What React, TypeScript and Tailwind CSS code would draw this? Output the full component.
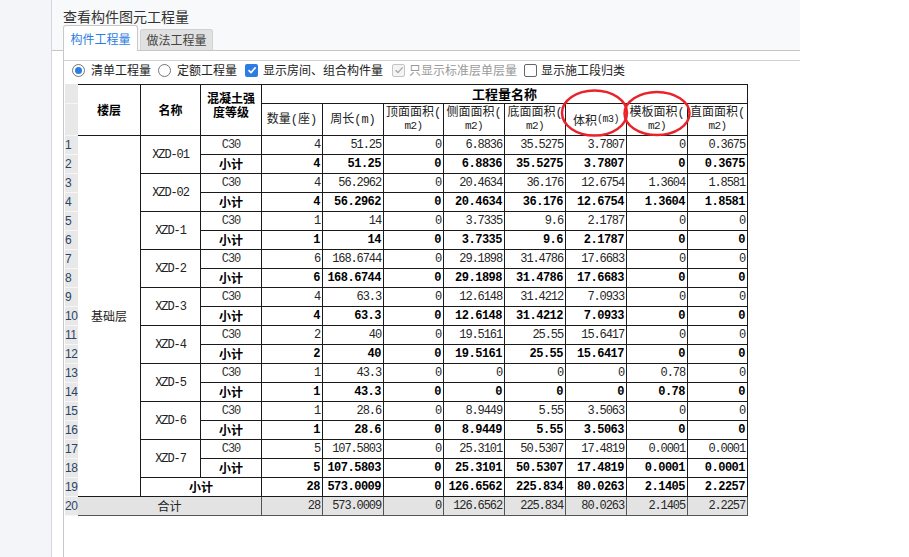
import clsx from "clsx";

const groups: { name: string; values: string[] }[] = [
  { name: "XZD-01", values: ["4", "51.25", "0", "6.8836", "35.5275", "3.7807", "0", "0.3675"] },
  { name: "XZD-02", values: ["4", "56.2962", "0", "20.4634", "36.176", "12.6754", "1.3604", "1.8581"] },
  { name: "XZD-1", values: ["1", "14", "0", "3.7335", "9.6", "2.1787", "0", "0"] },
  { name: "XZD-2", values: ["6", "168.6744", "0", "29.1898", "31.4786", "17.6683", "0", "0"] },
  { name: "XZD-3", values: ["4", "63.3", "0", "12.6148", "31.4212", "7.0933", "0", "0"] },
  { name: "XZD-4", values: ["2", "40", "0", "19.5161", "25.55", "15.6417", "0", "0"] },
  { name: "XZD-5", values: ["1", "43.3", "0", "0", "0", "0", "0.78", "0"] },
  { name: "XZD-6", values: ["1", "28.6", "0", "8.9449", "5.55", "3.5063", "0", "0"] },
  { name: "XZD-7", values: ["5", "107.5803", "0", "25.3101", "50.5307", "17.4819", "0.0001", "0.0001"] },
];

const total = ["28", "573.0009", "0", "126.6562", "225.834", "80.0263", "2.1405", "2.2257"];

const cell = "border-r border-b border-[#1a1a1a] flex items-center";
const cjk = "font-['Noto_Sans_CJK_SC',sans-serif]";
const mono = "font-['Liberation_Mono',monospace]";

function Num({ v, bold, gray }: { v: string; bold?: boolean; gray?: boolean }) {
  return (
    <div
      className={clsx(
        cell,
        mono,
        "justify-end pr-[2px] text-[12px] leading-none",
        bold ? "font-bold tracking-[-0.5px] text-black" : "tracking-[-1.1px] text-[#262626]",
        gray && "bg-[#e3e3e3] border-[#555]"
      )}
    >
      {v}
    </div>
  );
}

function Head({ top, bottom }: { top: string; bottom?: string }) {
  return (
    <div className={clsx(cell, "flex-col justify-center text-[#222]")}>
      <span className="whitespace-nowrap text-[12px] leading-[14px] font-['Liberation_Mono','Noto_Sans_CJK_SC',monospace]">{top}</span>
      {bottom && <span className={clsx(mono, "text-[11px] leading-[13px] tracking-[-0.6px]")}>{bottom}</span>}
    </div>
  );
}

function Radio({ on }: { on?: boolean }) {
  return (
    <span className="w-[13px] h-[13px] rounded-full border border-[#777] bg-white flex items-center justify-center">
      {on && <span className="w-[7px] h-[7px] rounded-full bg-[#2a7de1]" />}
    </span>
  );
}

function Check({ state }: { state: "on" | "off" | "disabled" }) {
  if (state === "on")
    return (
      <span className="w-[13px] h-[13px] rounded-[2px] bg-[#2d7be5] flex items-center justify-center">
        <svg width="10" height="10" viewBox="0 0 10 10">
          <path d="M1.5 5.2 L4 7.6 L8.6 2.4" fill="none" stroke="white" strokeWidth="1.6" />
        </svg>
      </span>
    );
  if (state === "disabled")
    return (
      <span className="w-[13px] h-[13px] rounded-[2px] border border-[#c4c4c4] bg-[#f4f4f4] flex items-center justify-center">
        <svg width="10" height="10" viewBox="0 0 10 10">
          <path d="M1.5 5.2 L4 7.6 L8.6 2.4" fill="none" stroke="#a8a8a8" strokeWidth="1.4" />
        </svg>
      </span>
    );
  return <span className="block w-[13px] h-[13px] rounded-[2px] border border-[#666] bg-white" />;
}

export default function App() {
  const rowNums = Array.from({ length: 20 }, (_, i) => i + 1);

  return (
    <div className="relative w-[909px] h-[557px] bg-white flex overflow-hidden">
      <div className="w-[52px] shrink-0 bg-[#f3f5f9] border-r border-[#d5d8dd]" />

      <div className="w-[748px] shrink-0 flex flex-col">
        {/* title + tabs */}
        <div className="h-[51px] bg-[#f8f9fa] border-b border-[#c6c6c6] pl-[11px] flex flex-col justify-between">
          <div className={clsx(cjk, "pt-[8px] text-[14px] leading-[16px] text-[#333]")}>查看构件图元工程量</div>
          <div className={clsx(cjk, "flex items-end gap-[2px] text-[12px]")}>
            <div className="w-[75px] h-[26px] -mb-px bg-white border border-b-0 border-[#c8c8c8] rounded-t-[3px] flex items-center justify-center text-[#2a7de1]">
              构件工程量
            </div>
            <div className="w-[73px] h-[21px] bg-[#e1e1e1] border border-b-0 border-[#d2d2d2] rounded-t-[3px] flex items-center justify-center text-[#444]">
              做法工程量
            </div>
          </div>
        </div>

        {/* panel */}
        <div className="flex-1 pl-[11px]">
          <div className="h-full border-l border-[#c8c8c8] pt-[9px]">
            <div className="border-t border-[#d2d2d2]">
              <div className={clsx(cjk, "h-[23px] pb-[5px] pl-[8px] flex items-center text-[12px] text-[#222]")}>
                <Radio on />
                <span className="ml-[6px]">清单工程量</span>
                <span className="ml-[7px]"><Radio /></span>
                <span className="ml-[6px]">定额工程量</span>
                <span className="ml-[8px]"><Check state="on" /></span>
                <span className="ml-[5px]">显示房间、组合构件量</span>
                <span className="ml-[9px]"><Check state="disabled" /></span>
                <span className="ml-[4px] text-[#9a9a9a]">只显示标准层单层量</span>
                <span className="ml-[7px]"><Check state="off" /></span>
                <span className="ml-[4px]">显示施工段归类</span>
              </div>

              {/* grid */}
              <div className="flex pl-px">
                <div className="w-[13px] bg-[#e8e8e8] flex flex-col font-['Liberation_Sans',sans-serif] text-[12px] text-[#2b4466]">
                  <div className="h-[20px] border-b border-[#f6f6f6]" />
                  <div className="h-[32px] border-b border-[#f6f6f6]" />
                  {rowNums.map((n) => (
                    <div key={n} className="h-[19px] border-b border-[#f6f6f6] flex items-center leading-none tracking-[-0.5px]">
                      {n}
                    </div>
                  ))}
                </div>

                <div className="grid grid-cols-[63px_60px_61px_61px_61px_60px_61px_61px_61px_61px_60px] grid-rows-[19px_32px_repeat(20,19px)] border-t border-[#1a1a1a]">
                  <div className={clsx(cell, cjk, "row-span-2 justify-center font-bold text-[12px] text-black")}>楼层</div>
                  <div className={clsx(cell, cjk, "row-span-2 justify-center font-bold text-[12px] text-black")}>名称</div>
                  <div className={clsx(cell, cjk, "row-span-2 flex-col justify-center pb-[10px] font-bold text-[12px] leading-[14px] text-black")}>
                    <span>混凝土强</span>
                    <span>度等级</span>
                  </div>
                  <div className={clsx(cell, cjk, "col-span-8 justify-center font-bold text-[13px] text-black")}>工程量名称</div>

                  <Head top="数量(座)" />
                  <Head top="周长(m)" />
                  <Head top="顶面面积(" bottom="m2)" />
                  <Head top="侧面面积(" bottom="m2)" />
                  <Head top="底面面积(" bottom="m2)" />
                  <div className={clsx(cell, "justify-center text-[12px] text-[#222]")}>
                    <span className={cjk}>体积</span>
                    <span className={clsx(mono, "text-[10px] tracking-[-0.5px]")}>(m3)</span>
                  </div>
                  <Head top="模板面积(" bottom="m2)" />
                  <Head top="直面面积(" bottom="m2)" />

                  {groups.map((g, i) => (
                    <div key={g.name} className="contents">
                      {i === 0 && (
                        <div className={clsx(cell, cjk, "row-span-19 justify-center text-[12px] text-[#222]")}>基础层</div>
                      )}
                      <div className={clsx(cell, mono, "row-span-2 justify-center text-[12px] tracking-[-1.1px] text-[#222]")}>
                        {g.name}
                      </div>
                      <div className={clsx(cell, mono, "justify-center text-[12px] tracking-[-1.1px] text-[#333]")}>C30</div>
                      {g.values.map((v, j) => (
                        <Num key={j} v={v} />
                      ))}
                      <div className={clsx(cell, cjk, "justify-center font-bold text-[12px] text-black")}>小计</div>
                      {g.values.map((v, j) => (
                        <Num key={j} v={v} bold />
                      ))}
                    </div>
                  ))}

                  <div className={clsx(cell, cjk, "col-span-2 justify-center font-bold text-[12px] text-black")}>小计</div>
                  {total.map((v, j) => (
                    <Num key={j} v={v} bold />
                  ))}

                  <div className={clsx(cell, cjk, "col-span-3 justify-center bg-[#e3e3e3] border-[#555] text-[12px] text-[#222]")}>合计</div>
                  {total.map((v, j) => (
                    <Num key={j} v={v} gray />
                  ))}
                </div>
              </div>
            </div>
          </div>
        </div>
      </div>

      <svg className="absolute left-0 top-0 pointer-events-none" width="909" height="557">
        <ellipse cx="594.5" cy="113" rx="32.5" ry="22.5" fill="none" stroke="#e8232a" strokeWidth="2.5" />
        <ellipse cx="657" cy="113.5" rx="32.5" ry="21.5" fill="none" stroke="#e8232a" strokeWidth="2.5" />
      </svg>
    </div>
  );
}
